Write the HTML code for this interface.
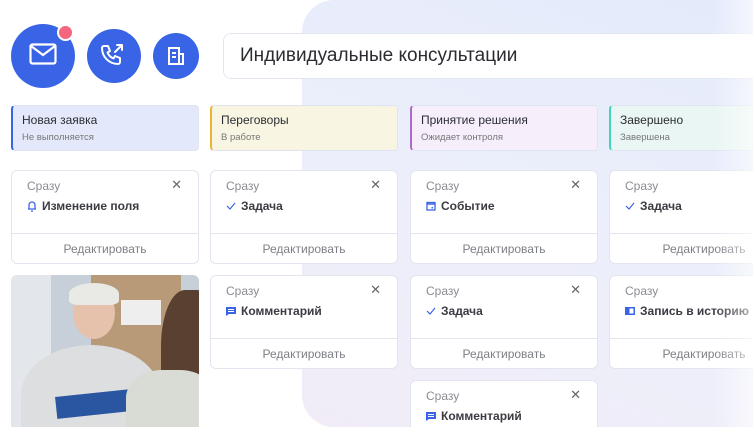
<!DOCTYPE html><html><head><meta charset="utf-8"><style>
*{margin:0;padding:0;box-sizing:border-box}
html,body{width:753px;height:427px;overflow:hidden}
body{background:#fff;position:relative;font-family:"Liberation Sans",sans-serif;color:#2b2d33}
.panel{position:absolute;left:302px;top:0;width:451px;height:427px;border-radius:32px 0 0 32px;background:linear-gradient(200deg,#e4eafb 0%,#eceffb 50%,#f1ecf7 100%)}
.fade{position:absolute;right:0;top:0;width:40px;height:427px;background:linear-gradient(90deg,rgba(255,255,255,0),rgba(255,255,255,.6))}
.c{position:absolute;border-radius:50%;background:#3a64e6}
.search{position:absolute;left:223px;top:33px;width:530px;height:46px;border:1px solid #e3e6ef;border-right:none;border-radius:8px 0 0 8px;background:#fff;font-size:19px;padding:11px 16px;color:#2a2c31}
.st{position:absolute;top:105px;width:188px;height:46px;border:1px solid #e0e4f2;border-radius:4px;padding:7px 9px}
.st b{display:block;font-weight:normal;font-size:12px;color:#2b2d33}
.st i{display:block;font-style:normal;font-size:9.5px;color:#777;margin-top:5px}
.card{position:absolute;width:188px;height:94px;background:#fff;border:1px solid #e2e5ee;border-radius:6px;overflow:hidden}
.card .s{position:absolute;left:15px;top:8px;font-size:12px;color:#8a8c92}
.card .x{position:absolute;right:16px;top:6px;font-size:13px;color:#666}
.card .t{position:absolute;left:15px;top:28px;font-size:12px;font-weight:bold;color:#3a3c42;display:flex;align-items:center;gap:5px;white-space:nowrap}
.card .e{position:absolute;left:0;right:0;top:62px;border-top:1px solid #e2e5ee;text-align:center;font-size:12px;color:#7d7f86;padding-top:8px}
.ic{width:10px;height:10px;display:inline-block}
</style></head><body>
<div class="panel"></div>
<div class="c" style="left:11px;top:24px;width:64px;height:64px"></div>
<svg style="position:absolute;left:29px;top:43px" width="28" height="22" viewBox="0 0 28 22"><rect x="1.5" y="1.5" width="25" height="19" rx="2" fill="none" stroke="#fff" stroke-width="2.2"/><path d="M2 3l12 9 12-9" fill="none" stroke="#fff" stroke-width="2.2"/></svg>
<div style="position:absolute;left:57px;top:24px;width:17px;height:17px;border-radius:50%;background:#f3667d;border:2px solid #fff"></div>
<div class="c" style="left:87px;top:29px;width:54px;height:54px"></div>
<svg style="position:absolute;left:100px;top:43px" width="26" height="26" viewBox="0 0 26 26" fill="none" stroke="#fff" stroke-width="2" stroke-linecap="round" stroke-linejoin="round"><path d="M4 3h4l2 5-2.5 1.5a11 11 0 0 0 6 6L15 13l5 2v4a2 2 0 0 1-2 2A16 16 0 0 1 2 5a2 2 0 0 1 2-2z"/><path d="M15 9l7-7M17 2h5v5"/></svg>
<div class="c" style="left:153px;top:33px;width:46px;height:46px"></div>
<svg style="position:absolute;left:167px;top:46px" width="18" height="20" viewBox="0 0 18 20" fill="none" stroke="#fff" stroke-width="2"><path d="M2 2h10v16H2z"/><path d="M12 8h4v10h-4M5 7h4M5 11h4M5 1v2"/></svg>
<div class="search">Индивидуальные консультации</div>

<div class="st" style="left:11px;background:#e3e9fa;border-left:2px solid #3a64e6"><b>Новая заявка</b><i>Не выполняется</i></div>
<div class="st" style="left:210px;background:#f8f5e3;border-left:2px solid #e8b53a"><b>Переговоры</b><i>В работе</i></div>
<div class="st" style="left:410px;background:#f6eefb;border-left:2px solid #a86cc7"><b>Принятие решения</b><i>Ожидает контроля</i></div>
<div class="st" style="left:609px;width:144px;border-right:none;border-radius:4px 0 0 4px;background:#e9f6f3;border-left:2px solid #3fd6b8"><b>Завершено</b><i>Завершена</i></div>

<div class="card" style="left:11px;top:170px"><span class="s">Сразу</span><span class="x">✕</span><span class="t"><svg class="ic" viewBox="0 0 10 12" style="height:12px"><path d="M2 9V5a3 3 0 0 1 6 0v4H1h8M4 11h2" fill="none" stroke="#3a64e6" stroke-width="1.3"/></svg>Изменение поля</span><div class="e">Редактировать</div></div>
<div class="card" style="left:210px;top:170px"><span class="s">Сразу</span><span class="x">✕</span><span class="t"><svg class="ic" viewBox="0 0 10 10"><path d="M1 5l3 3 5-6" fill="none" stroke="#3a64e6" stroke-width="1.2"/></svg>Задача</span><div class="e">Редактировать</div></div>
<div class="card" style="left:410px;top:170px"><span class="s">Сразу</span><span class="x">✕</span><span class="t"><svg class="ic" viewBox="0 0 10 10"><rect x="1" y="1.5" width="8" height="7.5" fill="none" stroke="#3a64e6" stroke-width="1.3"/><path d="M1 3h8" stroke="#3a64e6" stroke-width="1.5"/><rect x="5.5" y="6" width="1.5" height="1.5" fill="#3a64e6"/></svg>Событие</span><div class="e">Редактировать</div></div>
<div class="card" style="left:609px;top:170px;width:144px;border-right:none;border-radius:6px 0 0 6px"><span class="s">Сразу</span><span class="t"><svg class="ic" viewBox="0 0 10 10"><path d="M1 5l3 3 5-6" fill="none" stroke="#3a64e6" stroke-width="1.2"/></svg>Задача</span><div class="e" style="width:188px">Редактировать</div></div>

<div style="position:absolute;left:11px;top:275px;width:188px;height:152px;border-radius:6px 6px 0 0;overflow:hidden;background:#c7cfd9">
<div style="position:absolute;left:0;top:0;width:40px;height:152px;background:#e3e7ec"></div>
<div style="position:absolute;left:80px;top:0;width:90px;height:110px;background:#b89a78"></div>
<div style="position:absolute;left:110px;top:25px;width:40px;height:25px;background:#eee"></div>
<div style="position:absolute;left:10px;top:70px;width:140px;height:100px;border-radius:50% 50% 0 0;background:#dcdedf"></div>
<div style="position:absolute;left:62px;top:12px;width:42px;height:52px;border-radius:50%;background:#e6c2ac"></div>
<div style="position:absolute;left:58px;top:8px;width:50px;height:22px;border-radius:50% 50% 20% 20%;background:#e9e9e6"></div>
<div style="position:absolute;left:45px;top:118px;width:75px;height:22px;background:#2a55a0;transform:rotate(-6deg)"></div>
<div style="position:absolute;left:150px;top:15px;width:60px;height:140px;border-radius:40% 40% 0 0;background:#5a4030"></div>
<div style="position:absolute;left:115px;top:95px;width:90px;height:70px;border-radius:40% 40% 0 0;background:#d8dcd4"></div>
</div>
<div class="card" style="left:210px;top:275px"><span class="s">Сразу</span><span class="x">✕</span><span class="t"><svg class="ic" viewBox="0 0 10 10"><path d="M0 1h10v7H3l-3 2z" fill="#3a64e6"/><path d="M2 3.5h6M2 5.5h6" stroke="#fff" stroke-width="1"/></svg>Комментарий</span><div class="e">Редактировать</div></div>
<div class="card" style="left:410px;top:275px"><span class="s">Сразу</span><span class="x">✕</span><span class="t"><svg class="ic" viewBox="0 0 10 10"><path d="M1 5l3 3 5-6" fill="none" stroke="#3a64e6" stroke-width="1.2"/></svg>Задача</span><div class="e">Редактировать</div></div>
<div class="card" style="left:609px;top:275px;width:144px;border-right:none;border-radius:6px 0 0 6px"><span class="s">Сразу</span><span class="t"><svg class="ic" viewBox="0 0 10 10"><rect x="0" y="1" width="10" height="8" fill="#3a64e6"/><rect x="4.5" y="2.5" width="4" height="5" fill="#fff"/></svg>Запись в историю</span><div class="e" style="width:188px">Редактировать</div></div>
<div class="card" style="left:410px;top:380px;height:47px;border-bottom:none;border-radius:6px 6px 0 0"><span class="s">Сразу</span><span class="x">✕</span><span class="t"><svg class="ic" viewBox="0 0 10 10"><path d="M0 1h10v7H3l-3 2z" fill="#3a64e6"/><path d="M2 3.5h6M2 5.5h6" stroke="#fff" stroke-width="1"/></svg>Комментарий</span></div>
<div class="fade"></div>
</body></html>
